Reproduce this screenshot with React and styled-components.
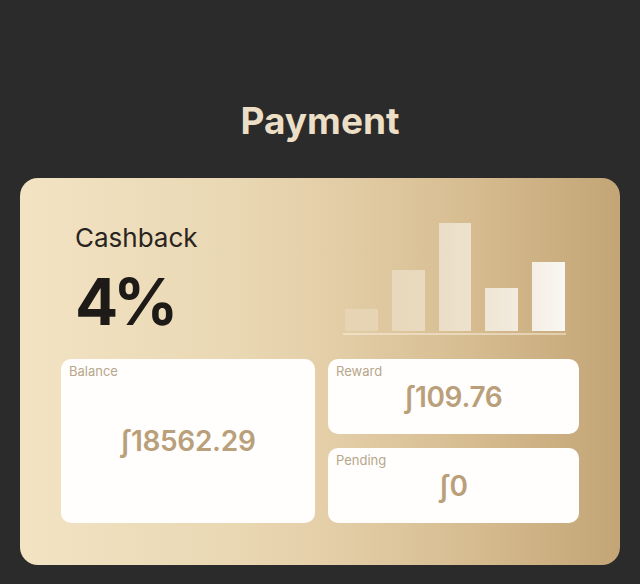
import React from "react";
import styled, { createGlobalStyle } from "styled-components";

const BARS = [22, 61, 108, 43, 69];

export default function App() {
  return (
    <Page>
      <GlobalStyle />
      <Title>Payment</Title>
      <Card>
        <TopRow>
          <Summary>
            <Label>Cashback</Label>
            <Rate>4%</Rate>
          </Summary>
          <Chart>
            {BARS.map((h, i) => (
              <Bar key={i} $level={i} style={{ height: h }} />
            ))}
          </Chart>
        </TopRow>
        <Stats>
          <StatBox $tall>
            <StatLabel>Balance</StatLabel>
            <StatValue>ʃ18562.29</StatValue>
          </StatBox>
          <StatBox>
            <StatLabel>Reward</StatLabel>
            <StatValue>ʃ109.76</StatValue>
          </StatBox>
          <StatBox>
            <StatLabel>Pending</StatLabel>
            <StatValue>ʃ0</StatValue>
          </StatBox>
        </Stats>
      </Card>
    </Page>
  );
}

const GlobalStyle = createGlobalStyle`
  html, body {
    margin: 0;
    background: #2b2b2b;
    font-family: Inter, "Noto Sans", sans-serif;
  }
`;

const Page = styled.div`
  min-height: 584px;
  padding: 99px 20px 0;
  box-sizing: border-box;
`;

const Title = styled.h1`
  margin: 0 0 35px;
  text-align: center;
  font-size: 37px;
  line-height: 44px;
  font-weight: 700;
  color: #ecdfc6;
  letter-spacing: 0;
`;

const Card = styled.div`
  height: 387px;
  box-sizing: border-box;
  border-radius: 18px;
  padding: 44px 41px 42px;
  background: linear-gradient(
    to right,
    #f2e3c3 0%,
    #ead8b4 35%,
    #e2cca5 55%,
    #d6bc90 75%,
    #c3a576 100%
  );
  display: flex;
  flex-direction: column;
  gap: 25px;
`;

const TopRow = styled.div`
  display: flex;
  justify-content: space-between;
  align-items: flex-end;
  height: 112px;
`;

const Summary = styled.div`
  display: flex;
  flex-direction: column;
  gap: 16px;
  padding-left: 14px;
`;

const Label = styled.div`
  font-size: 26px;
  line-height: 32px;
  color: #2a2420;
`;

const Rate = styled.div`
  font-size: 64px;
  line-height: 64px;
  font-weight: 700;
  color: #1e1a17;
  letter-spacing: -5px;
`;

const Chart = styled.div`
  display: flex;
  align-items: flex-end;
  gap: 14px;
  width: 223px;
  padding: 0 1px 2px 2px;
  margin-right: 13px;
  margin-bottom: -1px;
  box-sizing: border-box;
  border-bottom: 2px solid rgba(255, 248, 235, 0.45);
`;

const Bar = styled.div`
  width: 33px;
  background: linear-gradient(
    to right,
    rgba(255, 255, 255, ${(p) => 0.15 + p.$level * 0.16}),
    rgba(255, 255, 255, ${(p) => 0.22 + p.$level * 0.17})
  );
`;

const Stats = styled.div`
  flex: 1;
  display: grid;
  grid-template-columns: 254px 1fr;
  grid-template-rows: 1fr 1fr;
  column-gap: 13px;
  row-gap: 14px;
`;

const StatBox = styled.div`
  grid-row: ${(p) => (p.$tall ? "1 / span 2" : "auto")};
  background: #fffefc;
  border-radius: 10px;
  display: flex;
  flex-direction: column;
  padding: 4px 8px 20px;
`;

const StatLabel = styled.div`
  font-size: 13px;
  line-height: 16px;
  color: #b7a68b;
`;

const StatValue = styled.div`
  flex: 1;
  display: flex;
  align-items: center;
  justify-content: center;
  font-size: 28px;
  font-weight: 600;
  color: #b9a07a;
  letter-spacing: -0.3px;
`;
